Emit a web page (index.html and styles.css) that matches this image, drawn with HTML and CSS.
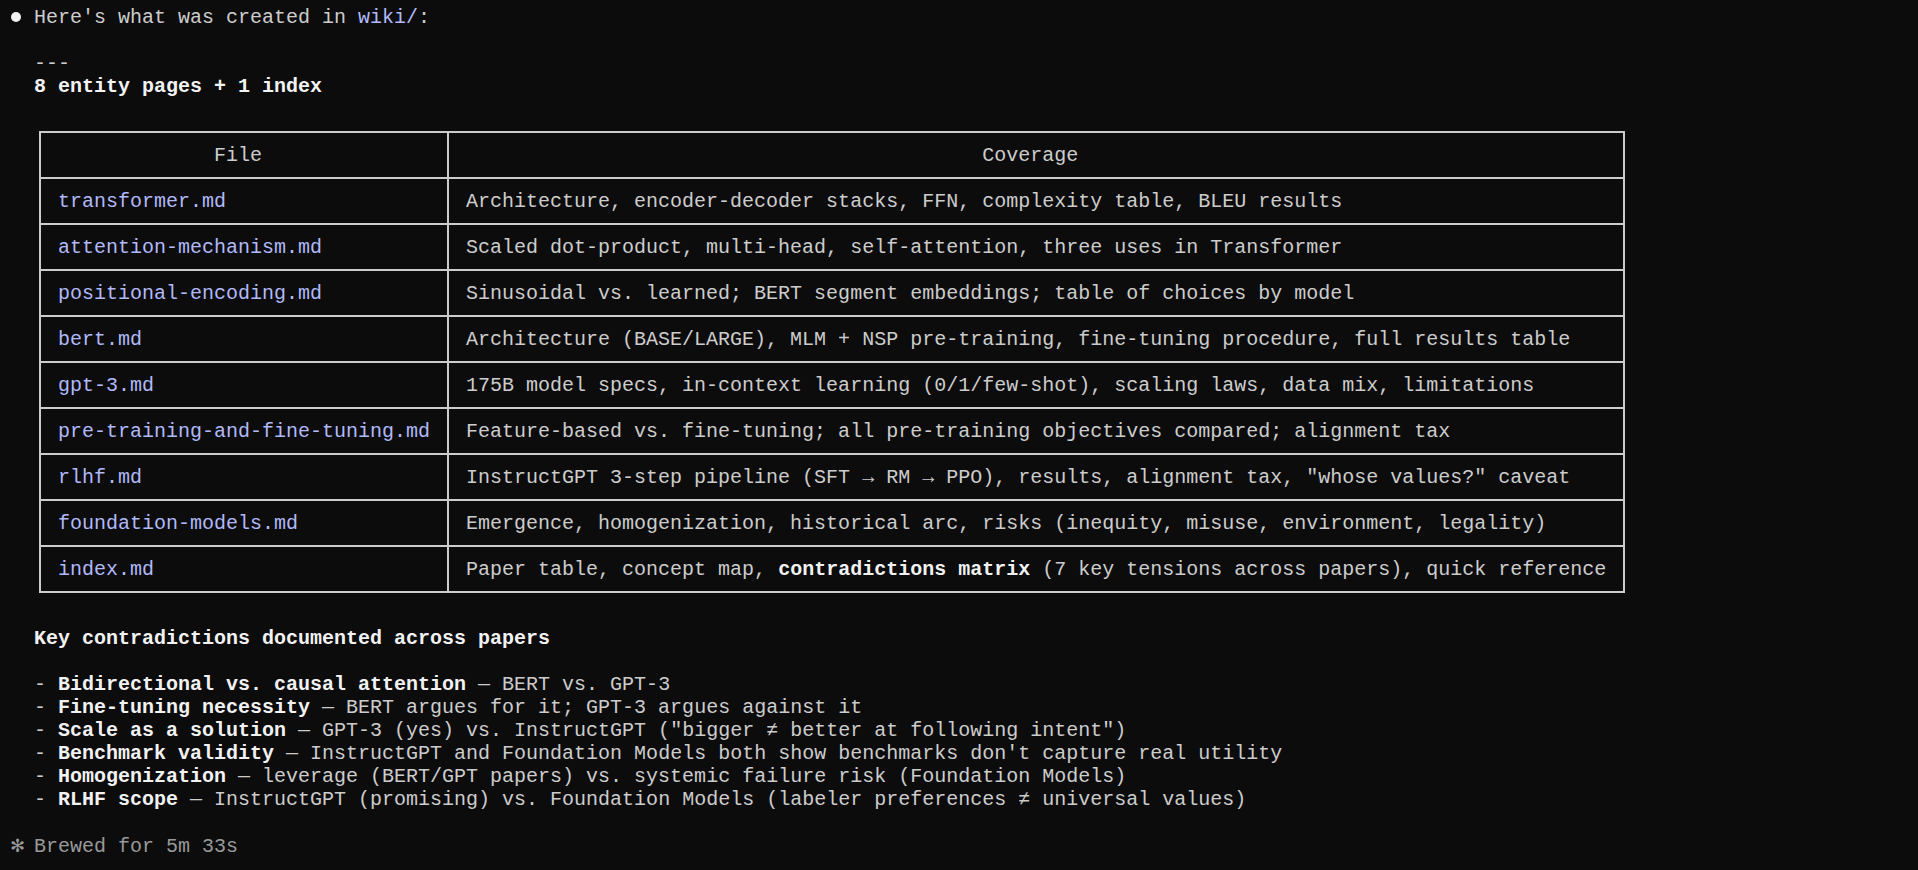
FILE: index.html
```html
<!DOCTYPE html>
<html lang="en">
<head>
<meta charset="utf-8">
<title>Terminal</title>
<link rel="stylesheet" href="styles.css">
</head>
<body>
<div class="term">
  <div class="line msg"><span class="bullet"></span><span>Here's what was created in <span class="link">wiki/</span>:</span></div>
  <div class="indent">
    <div class="line"></div>
    <div class="line">---</div>
    <div class="line strong">8 entity pages + 1 index</div>
    <div class="line"></div>
    <table class="files">
      <thead>
        <tr><th class="c1">File</th><th class="c2">Coverage</th></tr>
      </thead>
      <tbody>
        <tr><td class="link">transformer.md</td><td>Architecture, encoder-decoder stacks, FFN, complexity table, BLEU results</td></tr>
        <tr><td class="link">attention-mechanism.md</td><td>Scaled dot-product, multi-head, self-attention, three uses in Transformer</td></tr>
        <tr><td class="link">positional-encoding.md</td><td>Sinusoidal vs. learned; BERT segment embeddings; table of choices by model</td></tr>
        <tr><td class="link">bert.md</td><td>Architecture (BASE/LARGE), MLM + NSP pre-training, fine-tuning procedure, full results table</td></tr>
        <tr><td class="link">gpt-3.md</td><td>175B model specs, in-context learning (0/1/few-shot), scaling laws, data mix, limitations</td></tr>
        <tr><td class="link">pre-training-and-fine-tuning.md</td><td>Feature-based vs. fine-tuning; all pre-training objectives compared; alignment tax</td></tr>
        <tr><td class="link">rlhf.md</td><td>InstructGPT 3-step pipeline (SFT → RM → PPO), results, alignment tax, "whose values?" caveat</td></tr>
        <tr><td class="link">foundation-models.md</td><td>Emergence, homogenization, historical arc, risks (inequity, misuse, environment, legality)</td></tr>
        <tr><td class="link">index.md</td><td>Paper table, concept map, <b>contradictions matrix</b> (7 key tensions across papers), quick reference</td></tr>
      </tbody>
    </table>
    <div class="line strong">Key contradictions documented across papers</div>
    <div class="line"></div>
    <div class="line">- <b>Bidirectional vs. causal attention</b> — BERT vs. GPT-3</div>
    <div class="line">- <b>Fine-tuning necessity</b> — BERT argues for it; GPT-3 argues against it</div>
    <div class="line">- <b>Scale as a solution</b> — GPT-3 (yes) vs. InstructGPT ("bigger ≠ better at following intent")</div>
    <div class="line">- <b>Benchmark validity</b> — InstructGPT and Foundation Models both show benchmarks don't capture real utility</div>
    <div class="line">- <b>Homogenization</b> — leverage (BERT/GPT papers) vs. systemic failure risk (Foundation Models)</div>
    <div class="line">- <b>RLHF scope</b> — InstructGPT (promising) vs. Foundation Models (labeler preferences ≠ universal values)</div>
    <div class="line"></div>
  </div>
  <div class="line status"><span class="star">✻</span>Brewed for 5m 33s</div>
</div>
</body>
</html>
```

FILE: styles.css
```css
html, body {
  margin: 0;
  padding: 0;
  background: #0c0c0c;
}

body {
  font-family: "Liberation Mono", "DejaVu Sans Mono", monospace;
  font-size: 20px;
  line-height: 23px;
  color: #cccccc;
}

.term {
  padding: 6px 10px 0 10px;
}

.line {
  height: 23px;
  white-space: pre;
}

.msg {
  display: flex;
  align-items: center;
}

.bullet {
  width: 10px;
  height: 10px;
  border-radius: 50%;
  background: #f2f2f2;
  margin: -1px 13px 0 1px;
  flex: none;
}

.indent {
  padding-left: 24px;
}

.link {
  color: #b1b9f9;
}

.strong {
  font-weight: bold;
  color: #f2f2f2;
}

b {
  font-weight: bold;
  color: #f2f2f2;
}

.files {
  border-collapse: collapse;
  margin: 10px 0 34px 5px;
  white-space: pre;
}

.files th,
.files td {
  border: 2px solid #cccccc;
  padding: 11px 17px 10px 17px;
  text-align: left;
  font-weight: normal;
}

.files th {
  text-align: center;
  color: #cccccc;
  padding-right: 29px;
}

.status {
  color: #999999;
}

.star {
  display: inline-block;
  width: 24px;
  font-family: "DejaVu Sans", sans-serif;
  font-size: 18px;
  color: #999999;
}
```
